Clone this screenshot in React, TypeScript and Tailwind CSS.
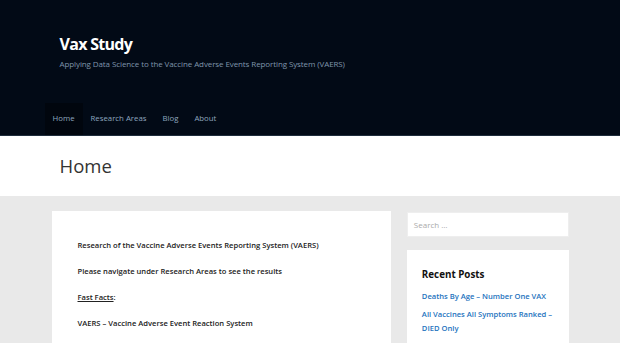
export default function App() {
  const navItems = ["Home", "Research Areas", "Blog", "About"];
  const recentPosts = [
    "Deaths By Age – Number One VAX",
    "All Vaccines All Symptoms Ranked – DIED Only",
    "Top Ten Symptoms – By Vaccine",
  ];

  return (
    <div className="min-h-screen bg-[#e9e9e9] font-['Open_Sans',sans-serif]">
      {/* Header */}
      <header className="bg-[#020a16] border-b border-[#1f2d3c]">
        <div className="w-[517px] mx-auto">
          <div className="pt-[33px] pl-[8px]">
            <h1 className="text-[16px] font-bold text-white leading-[22px] tracking-[-0.7px]">Vax Study</h1>
            <p className="text-[8px] text-[#7f95ab] leading-[14px] mt-[2px] tracking-[-0.1px]">
              Applying Data Science to the Vaccine Adverse Events Reporting System (VAERS)
            </p>
          </div>
          <nav className="flex mt-[32px] -ml-[7px]">
            {navItems.map((item, i) => (
              <a
                key={item}
                className={
                  "h-[32px] px-[8px] flex items-center text-[7.8px] text-[#8ea6bf] " +
                  (i === 0 ? "bg-[#01060e]" : "")
                }
              >
                {item}
              </a>
            ))}
          </nav>
        </div>
      </header>

      {/* Page title */}
      <div className="bg-white h-[60px]">
        <div className="w-[517px] mx-auto pl-[8px] pt-[15px]">
          <h2 className="text-[18.5px] text-[#333] leading-[30px]">Home</h2>
        </div>
      </div>

      {/* Content */}
      <div className="w-[517px] mx-auto flex gap-[16px] pt-[15px] items-start">
        <main className="w-[340px] bg-white px-[26px] pt-[27px] pb-[20px]">
          <div className="flex flex-col gap-[11px] text-[7.6px] font-semibold text-[#222] leading-[15px]">
            <p>Research of the Vaccine Adverse Events Reporting System (VAERS)</p>
            <p>Please navigate under Research Areas to see the results</p>
            <p>
              <span className="underline">Fast Facts</span>:
            </p>
            <p>VAERS – Vaccine Adverse Event Reaction System</p>
          </div>
        </main>

        <aside className="w-[162px] flex flex-col gap-[13px] pt-[1px]">
          <div className="bg-white h-[25px] border border-[#eee] flex items-center px-[6px]">
            <span className="text-[8px] text-[#aaa]">Search …</span>
          </div>
          <div className="bg-white px-[15px] pt-[18px] pb-[16px]">
            <h3 className="text-[9.8px] font-bold text-[#111] leading-[14px]">Recent Posts</h3>
            <ul className="mt-[7px] flex flex-col gap-[4px]">
              {recentPosts.map((p) => (
                <li key={p} className="text-[7.6px] font-semibold text-[#1e73be] leading-[14px]">
                  {p}
                </li>
              ))}
            </ul>
          </div>
        </aside>
      </div>
    </div>
  );
}
